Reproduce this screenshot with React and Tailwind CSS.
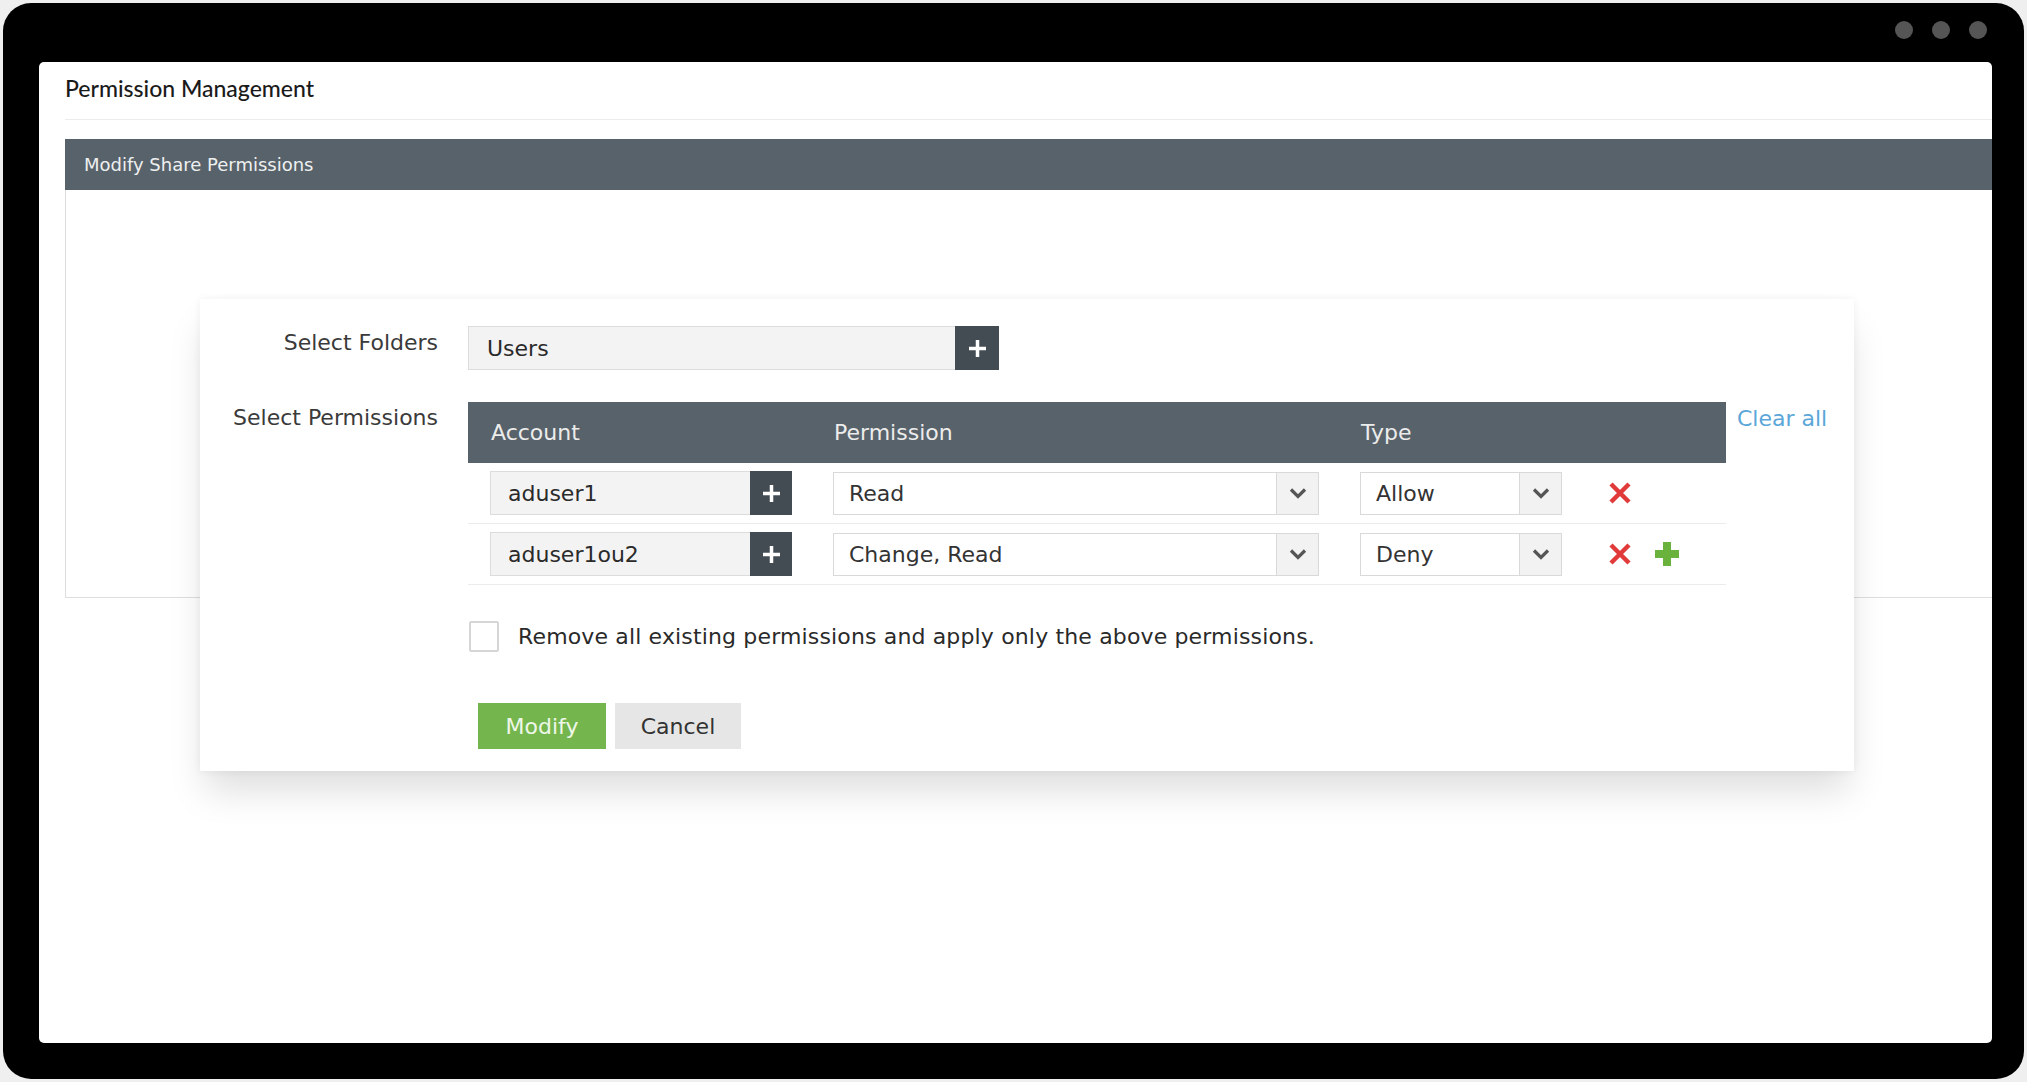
import React from "react";

const rows = [
  { account: "aduser1", permission: "Read", type: "Allow", add: false },
  { account: "aduser1ou2", permission: "Change, Read", type: "Deny", add: true },
];

function PlusIcon({ className = "" }) {
  return (
    <svg width="21" height="21" viewBox="0 0 21 21" className={className}>
      <path d="M10.5 2v17M2 10.5h17" stroke="currentColor" strokeWidth="3.5" />
    </svg>
  );
}

function Chevron() {
  return (
    <svg width="18" height="12" viewBox="0 0 18 12">
      <path d="M2 2.5l7 7 7-7" fill="none" stroke="#555" strokeWidth="3.2" />
    </svg>
  );
}

function RemoveIcon() {
  return (
    <svg width="24" height="24" viewBox="0 0 24 24">
      <path d="M3 3l18 18M21 3L3 21" stroke="#e03a3a" strokeWidth="4.5" />
    </svg>
  );
}

function AddIcon() {
  return (
    <svg width="26" height="26" viewBox="0 0 26 26">
      <path d="M13 1v24M1 13h24" stroke="#69b33d" strokeWidth="8" />
    </svg>
  );
}

function Select({ value, width }) {
  return (
    <div className={`flex h-[43px] border border-[#d9d9d9] bg-white ${width}`}>
      <div className="flex flex-1 items-center pl-[15px] text-[#333]">{value}</div>
      <div className="flex w-[42px] items-center justify-center border-l border-[#d9d9d9] bg-[#f2f2f2]">
        <Chevron />
      </div>
    </div>
  );
}

export default function App() {
  return (
    <div className="h-[1082px] w-[2027px] bg-[#efefef] p-[3px]">
      <div className="flex h-full flex-col rounded-[28px] bg-black pb-[36px] pl-[36px] pr-[32px]">
        {/* barra da janela */}
        <div className="flex h-[59px] items-start justify-end gap-[19px] pr-[5px] pt-[18px]">
          <span className="h-[18px] w-[18px] rounded-full bg-[#555]" />
          <span className="h-[18px] w-[18px] rounded-full bg-[#555]" />
          <span className="h-[18px] w-[18px] rounded-full bg-[#555]" />
        </div>

        <div className="relative flex-1 overflow-hidden rounded-[5px] bg-white pl-[26px]">
          <div className="h-[58px] border-b border-[#ececec] pt-[14px] font-['Lato',sans-serif] text-[23px] font-medium leading-[24px] text-[#1a1a1a]">
            Permission Management
          </div>

          <div className="mt-[19px] flex h-[51px] items-center bg-[#58626a] pl-[19px] font-['DejaVu_Sans',sans-serif] text-[18px] text-[#eef0f0]">
            Modify Share Permissions
          </div>
          <div className="h-[408px] border-b border-l border-[#dedede]" />

          {/* modal */}
          <div className="absolute left-[161px] top-[237px] w-[1654px] bg-white pb-[22px] pt-[27px] font-['DejaVu_Sans',sans-serif] text-[22px] shadow-[0_25px_35px_-5px_rgba(0,0,0,0.13),0_0_8px_rgba(0,0,0,0.06)]">
            <div className="grid grid-cols-[238px_1fr] gap-x-[30px]">
              <div className="pt-[2px] text-right leading-[30px] text-[#3a3a3a]">Select Folders</div>
              <div className="flex">
                <div className="flex h-[44px] w-[487px] items-center border border-r-0 border-[#dcdcdc] bg-[#f3f3f3] pl-[18px] text-[#2a2a2a]">
                  Users
                </div>
                <button className="flex h-[44px] w-[44px] items-center justify-center bg-[#434c53] text-white">
                  <PlusIcon />
                </button>
              </div>

              <div className="mt-[32px] pt-[1px] text-right leading-[30px] text-[#3a3a3a]">Select Permissions</div>
              <div className="mt-[32px] flex items-start">
                <div className="w-[1258px]">
                  <div className="flex h-[61px] items-center bg-[#58626a] pl-[23px] text-[#ececec]">
                    <span className="w-[343px]">Account</span>
                    <span className="w-[527px]">Permission</span>
                    <span>Type</span>
                  </div>
                  {rows.map((r) => (
                    <div key={r.account} className="flex h-[61px] items-center border-b border-[#ececec] pl-[22px]">
                      <div className="flex">
                        <div className="flex h-[44px] w-[260px] items-center border border-r-0 border-[#dcdcdc] bg-[#f3f3f3] pl-[17px] text-[#2a2a2a]">
                          {r.account}
                        </div>
                        <button className="flex h-[44px] w-[42px] items-center justify-center bg-[#434c53] text-white">
                          <PlusIcon />
                        </button>
                      </div>
                      <div className="ml-[41px]">
                        <Select value={r.permission} width="w-[486px]" />
                      </div>
                      <div className="ml-[41px]">
                        <Select value={r.type} width="w-[202px]" />
                      </div>
                      <div className="ml-[46px] flex">
                        <RemoveIcon />
                      </div>
                      {r.add && (
                        <div className="ml-[22px] flex">
                          <AddIcon />
                        </div>
                      )}
                    </div>
                  ))}
                </div>
                <a className="ml-[11px] pt-[2px] leading-[30px] text-[#5ba6d9]">Clear all</a>
              </div>

              <div />
              <div>
                <label className="mt-[35px] flex items-center pl-[1px]">
                  <span className="h-[31px] w-[30px] rounded-[2px] border-2 border-[#d6d6d6] bg-white" />
                  <span className="ml-[19px] tracking-[0.15px] text-[#2a2a2a]">
                    Remove all existing permissions and apply only the above permissions.
                  </span>
                </label>
                <div className="ml-[10px] mt-[50px] flex gap-[9px]">
                  <button className="h-[46px] w-[128px] bg-[#74b64d] text-[#eef7e8]">Modify</button>
                  <button className="h-[46px] w-[126px] bg-[#e6e6e6] text-[#333]">Cancel</button>
                </div>
              </div>
            </div>
          </div>
        </div>
      </div>
    </div>
  );
}
